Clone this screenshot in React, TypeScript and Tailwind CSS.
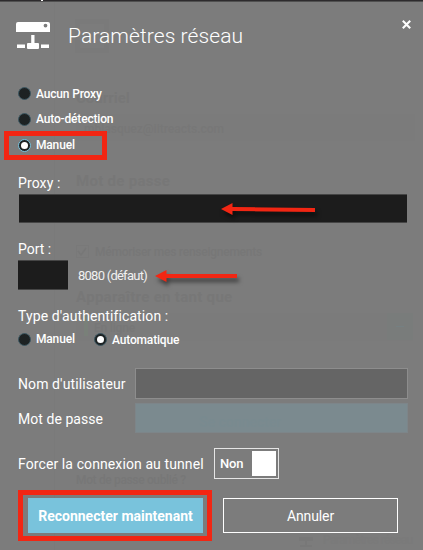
import React from "react";

function Radio({ label, checked = false, bright = false }: { label: string; checked?: boolean; bright?: boolean }) {
  return (
    <div role="radio" aria-checked={checked} className="flex items-center gap-[5px]">
      <span
        className={`flex size-[13px] shrink-0 items-center justify-center rounded-full border bg-[#1d2223] ${
          bright ? "border-[#79c3dd]" : "border-[#3d5862]"
        }`}
      >
        {checked && <span className="size-[7px] rounded-full bg-white" />}
      </span>
      <span className="text-[12px] leading-4 font-medium tracking-[-0.17px] whitespace-nowrap">{label}</span>
    </div>
  );
}

function Backdrop() {
  return (
    <div aria-hidden="true" className="pointer-events-none absolute inset-0 font-bold whitespace-nowrap text-[#777777]">
      <div className="absolute top-[1px] left-[54px] h-[549px] w-px bg-[#7a7a7a]" />
      <div className="absolute top-[19px] left-[75px] size-[34px] border-5 border-[#7a7a7a]" />
      <span className="absolute top-[88px] left-[76px] text-[15px] leading-5">Courriel</span>
      <div className="absolute top-[114px] left-[76px] h-[27px] w-[339px] bg-[#7b7b7b]" />
      <span className="absolute top-[119px] left-[84px] text-[12px] leading-5 font-medium">mblasquez@iitreacts.com</span>
      <span className="absolute top-[171px] left-[76px] text-[15px] leading-5 tracking-[0.3px]">Mot de passe</span>
      <svg className="absolute top-[245px] left-[76px]" width="13" height="13" fill="none" stroke="#777777">
        <path d="M.5.5h12v12H.5z" stroke="#797979" />
        <path d="m2 6 3 4 5-7" strokeWidth="1.5" />
      </svg>
      <span className="absolute top-[242px] left-[95px] text-[12px] leading-5 font-medium tracking-[-0.25px]">Mémoriser mes renseignements</span>
      <span className="absolute top-[287px] left-[76px] text-[15px] leading-5 tracking-[0.3px]">Apparaître en tant que</span>
      <div className="absolute top-[313px] left-[76px] h-[28px] w-[337px] bg-[#7b7b7b]" />
      <div className="absolute top-[316px] left-[84px] h-5 w-1 bg-[#798079]" />
      <span className="absolute top-[318px] left-[94px] text-[12px] leading-5 font-medium tracking-[-0.2px]">En ligne</span>
      <div className="absolute top-[313px] left-[387px] flex h-[27px] w-[26px] items-center justify-center bg-[#797c7b]">
        <span className="h-px w-2 bg-[#758082]" />
      </div>
      <span className="absolute top-[470px] left-[76px] text-[12px] leading-5 font-medium tracking-[-0.35px]">Mot de passe oublié ?</span>
      <svg className="absolute top-[536px] left-[299px]" width="15" height="12" fill="#787878">
        <path d="M0 1h14v4H0zM6 5h2v4H6zM1 9h12v2H1z" />
      </svg>
      <span className="absolute top-[530px] left-[323px] text-[12px] leading-5 font-medium tracking-[-0.7px] text-[#7a7a7a]">Paramètres réseau</span>
    </div>
  );
}

function Arrow({ width, tilt = 0 }: { width: number; tilt?: number }) {
  const end = 6 + tilt;
  return (
    <svg width={width} height="14" className="shrink-0 overflow-visible drop-shadow-[2px_4px_2px_rgba(0,0,0,0.5)]" fill="#f22613">
      <path d={`M0 6 11.5 0V4L${width} ${end - 2}V${end + 2}L11.5 8V12Z`} />
    </svg>
  );
}

export default function App() {
  return (
    <main className="relative h-[550px] w-[423px] overflow-hidden bg-[#7c7c7c] font-[Roboto,'Liberation_Sans',sans-serif] text-white">
      <Backdrop />
      <div className="relative flex h-full flex-col">
        <div className="flex h-[2px] border-b border-[#505050] bg-[#2d2b2d] pl-[41px]">
          <span className="h-px w-[2px] bg-white" />
        </div>
        <header className="flex h-[79px] items-start pr-3 pl-4">
          <svg width="35" height="29" viewBox="0 0 35 29" className="mt-5 shrink-0" fill="white">
            <path fillRule="evenodd" d="M2 0H32Q34 0 34 2V10H0V2Q0 0 2 0ZM29.5 1.7A1.9 1.9 0 1 0 29.5 5.5 1.9 1.9 0 1 0 29.5 1.7Z" />
            <path d="M15.2 13h3.3v8h3.5q1 0 1 1v4q0 1-1 1H12q-1 0-1-1v-4q0-1 1-1h3.2zM1 22.5h8V26H1zM25 22.5h8V26h-8z" />
          </svg>
          <h1 className="mt-5 ml-[17px] text-[21px] leading-7 font-light tracking-[0.08px]">Paramètres réseau</h1>
          <button aria-label="Fermer" className="mt-[18px] ml-auto flex size-[9px]">
            <svg width="9" height="9" stroke="white" strokeWidth="2.1">
              <path d="m.8.8 7.4 7.4M8.2.8.8 8.2" />
            </svg>
          </button>
        </header>
        <div role="radiogroup" className="flex h-[79px] flex-col pl-[18px]">
          <div className="flex h-[25px] items-center"><Radio label="Aucun Proxy" /></div>
          <div className="flex h-[25px] items-center pt-px"><Radio label="Auto-détection" /></div>
          <div className="-ml-[14px] flex h-[29px] w-[103px] shrink-0 items-center border-5 border-[#f22613] pb-px pl-[9px]">
            <Radio label="Manuel" checked bright />
          </div>
        </div>
        <label className="mt-[13px] ml-[18px] text-[14px] leading-5 tracking-[0.1px]">Proxy :</label>
        <div className="mt-[1px] ml-[19px] flex h-[29px] w-[388px] border-y border-[#454545] bg-[#1c1c1c]">
          <div className="mt-[8px] ml-[202px]"><Arrow width={94} tilt={1} /></div>
        </div>
        <label className="mt-4 ml-[18px] text-[14px] leading-5">Port :</label>
        <div className="mt-[1px] flex h-[30px] items-center pl-[18px]">
          <div className="h-[30px] w-[50px] border-y border-[#454545] bg-[#1c1c1c]" />
          <span className="ml-[10px] w-[77px] pt-px text-[13px] leading-5 tracking-[-0.75px] whitespace-nowrap text-[#f0f0f0]">8080 (défaut)</span>
          <div className="pt-[3px]"><Arrow width={82} /></div>
        </div>
        <div className="mt-[16px] ml-[18px] text-[14px] leading-5 tracking-[0.1px]">Type d'authentification :</div>
        <div role="radiogroup" className="mt-[5px] flex h-[17px] pl-[18px]">
          <div className="w-[76px]"><Radio label="Manuel" /></div>
          <Radio label="Automatique" checked />
        </div>
        <div className="mt-5 flex h-[31px] items-center pl-[18px]">
          <label className="w-[117px] text-[14px] leading-5 tracking-[0.1px]">Nom d'utilisateur</label>
          <div className="h-[31px] w-[273px] border border-[#8d8d8d] bg-[#656565]" />
        </div>
        <div className="mt-1 flex h-[30px] items-center pl-[18px]">
          <label className="w-[117px] pt-px text-[14px] leading-5 tracking-[0.05px]">Mot de passe</label>
          <div className="flex h-[30px] w-[273px] items-center border border-[#7d8589] bg-[#7b8a8f] pt-2 pl-[63px]">
            <span aria-hidden="true" className="text-[14px] font-medium text-[#798a90]">Se connecter</span>
          </div>
        </div>
        <div className="mt-[15px] flex h-[31px] items-center pl-[18px]">
          <span className="w-[196px] text-[14px] leading-5 tracking-[0.1px]">Forcer la connexion au tunnel</span>
          <button className="flex h-[31px] w-[65px] items-center justify-between border border-[#e5e5e5] pr-[2px] pl-[5px] text-[13px] font-medium tracking-[-0.2px]">
            Non
            <span className="h-[25px] w-6 bg-white" />
          </button>
        </div>
        <div className="mt-[11px] flex h-[51px] pl-[18px]">
          <div className="flex w-[194px] items-start border-5 border-[#f22613] pt-[3px] pl-[5px]">
            <button className="h-[35px] w-[175px] bg-[#79c3dc] text-[14px] leading-5 font-bold whitespace-nowrap">Reconnecter maintenant</button>
          </div>
          <button className="mt-2 ml-[11px] h-[35px] w-[175px] border border-white text-[14px] leading-5 font-normal tracking-[-0.1px]">Annuler</button>
        </div>
      </div>
    </main>
  );
}
